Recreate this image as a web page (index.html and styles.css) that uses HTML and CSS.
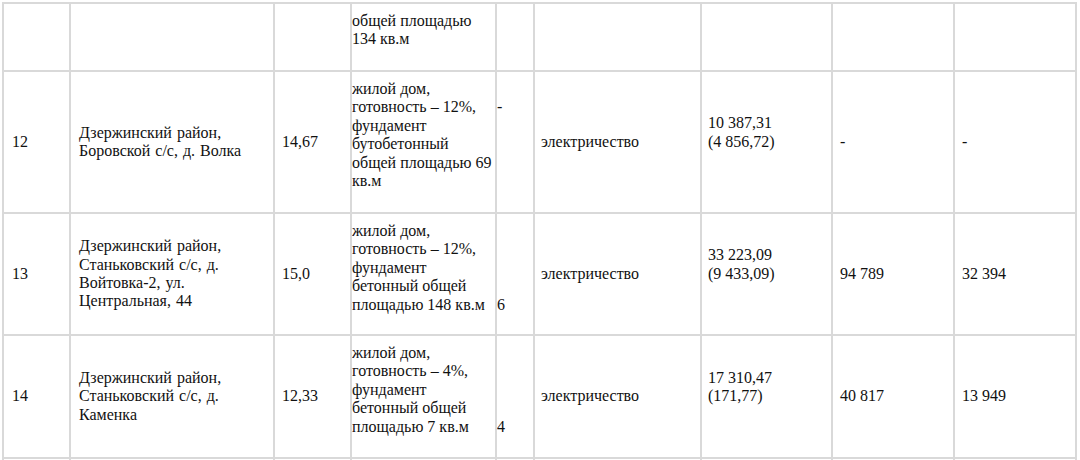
FILE: index.html
```html
<!DOCTYPE html>
<html lang="ru">
<head>
<meta charset="utf-8">
<title>Таблица</title>
<link rel="stylesheet" href="styles.css">
</head>
<body>
<table class="grid">
  <colgroup>
    <col class="w1"><col class="w2"><col class="w3"><col class="w4"><col class="w5"><col class="w6"><col class="w7"><col class="w8"><col class="w9">
  </colgroup>
  <tbody>
    <tr class="r1">
      <td class="p1"></td>
      <td class="p2"></td>
      <td class="p3"></td>
      <td class="desc">общей площадью<br>134 кв.м</td>
      <td class="extra"></td>
      <td class="p6"></td>
      <td class="p7"></td>
      <td class="p8"></td>
      <td class="p9"></td>
    </tr>
    <tr class="r2">
      <td class="p1">12</td>
      <td class="p2">Дзержинский район,<br>Боровской с/с, д. Волка</td>
      <td class="p3">14,67</td>
      <td class="desc">жилой дом,<br>готовность – 12%,<br>фундамент<br>бутобетонный<br>общей площадью 69<br>кв.м</td>
      <td class="extra">&nbsp;<br>-</td>
      <td class="p6">электричество</td>
      <td class="p7">10 387,31<br>(4 856,72)<br>&nbsp;</td>
      <td class="p8">-</td>
      <td class="p9">-</td>
    </tr>
    <tr class="r3">
      <td class="p1">13</td>
      <td class="p2">Дзержинский район,<br>Станьковский с/с, д.<br>Войтовка-2, ул.<br>Центральная, 44</td>
      <td class="p3">15,0</td>
      <td class="desc">жилой дом,<br>готовность – 12%,<br>фундамент<br>бетонный общей<br>площадью 148 кв.м</td>
      <td class="extra">&nbsp;<br>&nbsp;<br>&nbsp;<br>&nbsp;<br>6</td>
      <td class="p6">электричество</td>
      <td class="p7">33 223,09<br>(9 433,09)<br>&nbsp;</td>
      <td class="p8">94 789</td>
      <td class="p9">32 394</td>
    </tr>
    <tr class="r4">
      <td class="p1">14</td>
      <td class="p2">Дзержинский район,<br>Станьковский с/с, д.<br>Каменка</td>
      <td class="p3">12,33</td>
      <td class="desc">жилой дом,<br>готовность – 4%,<br>фундамент<br>бетонный общей<br>площадью 7 кв.м</td>
      <td class="extra">&nbsp;<br>&nbsp;<br>&nbsp;<br>&nbsp;<br>4</td>
      <td class="p6">электричество</td>
      <td class="p7">17 310,47<br>(171,77)<br>&nbsp;</td>
      <td class="p8">40 817</td>
      <td class="p9">13 949</td>
    </tr>
    <tr class="r5">
      <td class="p1"></td><td class="p2"></td><td class="p3"></td><td class="desc"></td><td class="extra"></td><td class="p6"></td><td class="p7"></td><td class="p8"></td><td class="p9"></td>
    </tr>
  </tbody>
</table>
</body>
</html>
```

FILE: styles.css
```css
html, body {
  margin: 0;
  padding: 0;
  background: #ffffff;
  overflow: hidden;
}

body {
  padding: 2px 0 0 2px;
  font-family: "Liberation Serif", "Times New Roman", serif;
  font-size: 16px;
  color: #111111;
}

.grid {
  border-collapse: separate;
  border-spacing: 0;
  table-layout: fixed;
  width: 1075px;
  border-top: 2px solid #d9d9d9;
  border-left: 2px solid #d9d9d9;
  font-family: "Liberation Serif", "Times New Roman", serif;
}

.w1 { width: 67px; }
.w2 { width: 204px; }
.w3 { width: 77px; }
.w4 { width: 145px; }
.w5 { width: 38px; }
.w6 { width: 167px; }
.w7 { width: 131px; }
.w8 { width: 122px; }
.w9 { width: 122px; }

.grid td {
  box-sizing: border-box;
  border-right: 2px solid #d9d9d9;
  border-bottom: 2px solid #d9d9d9;
  padding: 0 0 0 7px;
  vertical-align: middle;
  white-space: nowrap;
  line-height: 18.4px;
  overflow: hidden;
  font-family: "Liberation Serif", "Times New Roman", serif;
  font-size: 16px;
}

.grid .r1 td { height: 68px; }
.grid .r2 td { height: 142px; }
.grid .r3 td { height: 122px; }
.grid .r4 td { height: 123px; }
.grid .r5 td { height: 40px; }

.grid td.p1 { padding-left: 8px; }
.grid td.p2 { padding-left: 8px; word-spacing: 1px; }
.grid td.p3 { padding-left: 7px; }
.grid td.desc {
  vertical-align: top;
  padding: 8px 0 0 0;
}
.grid td.extra {
  vertical-align: top;
  padding: 8px 0 0 0;
}
.grid td.p6 { padding-left: 6px; }
.grid td.p7 { padding-left: 6px; }
.grid td.p8 { padding-left: 7px; }
.grid td.p9 { padding-left: 7px; }
```
